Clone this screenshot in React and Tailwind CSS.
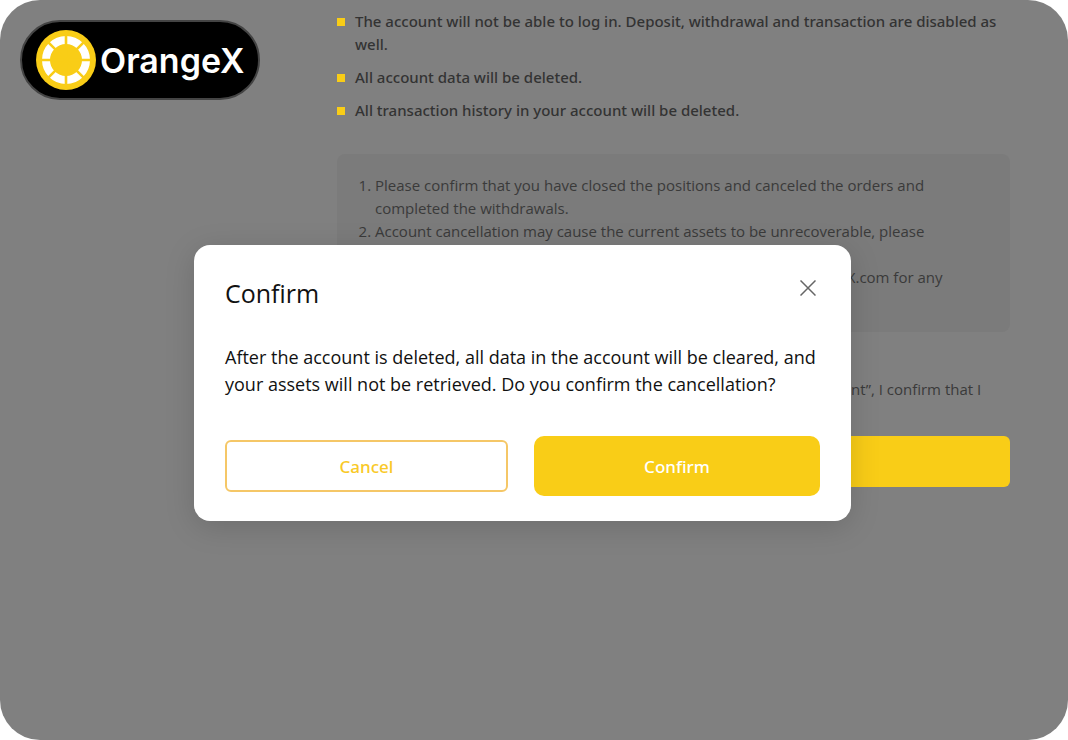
import React from 'react';

const effects = [
  'The account will not be able to log in. Deposit, withdrawal and transaction are disabled as well.',
  'All account data will be deleted.',
  'All transaction history in your account will be deleted.',
];

function LogoMark() {
  return (
    <svg viewBox="0 0 60 60" className="size-15 shrink-0" aria-hidden="true">
      <circle cx="30" cy="30" r="30" fill="#f9cd17" />
      <circle cx="30" cy="30" r="20" fill="none" stroke="#fff" strokeWidth="8" />
      <g stroke="#f9cd17" strokeWidth="2.6">
        <path d="M30 4V56" />
        <path d="M4 30H56" />
        <path d="M11.6 11.6L48.4 48.4" />
        <path d="M48.4 11.6L11.6 48.4" />
      </g>
    </svg>
  );
}

function Dialog() {
  return (
    <div
      role="dialog"
      aria-labelledby="dialog-title"
      className="w-full max-w-[657px] rounded-2xl bg-white pt-[30px] pb-[25px] px-[31px] text-[#111] shadow-[0_6px_30px_rgba(0,0,0,0.15)]"
    >
      <div className="flex items-start justify-between">
        <h2 id="dialog-title" className="text-[25px] leading-9">Confirm</h2>
        <button type="button" aria-label="Close" className="mt-px p-1 text-[#666]">
          <svg viewBox="0 0 16 16" className="size-4" fill="none" stroke="currentColor" strokeWidth="1.5">
            <path d="M0.5 0.5L15.5 15.5M15.5 0.5L0.5 15.5" />
          </svg>
        </button>
      </div>
      <p className="mt-[33px] text-lg leading-[27px]">
        After the account is deleted, all data in the account will be cleared, and your assets will not be retrieved. Do
        you confirm the cancellation?
      </p>
      <div className="mt-[38px] flex items-center gap-[26px] font-['Noto_Sans',sans-serif] text-[17px] font-medium">
        <button type="button" className="h-[52px] w-[283px] rounded-md border-2 border-[#f5c767] text-[#f9c927]">
          Cancel
        </button>
        <button type="button" className="h-15 flex-1 rounded-[10px] bg-[#f9cd17] text-white">
          Confirm
        </button>
      </div>
    </div>
  );
}

function App() {
  return (
    <div className="relative flex min-h-screen overflow-hidden rounded-[40px] bg-[#808080] font-['Open_Sans',sans-serif] text-[15px] leading-[23px] text-[#333]">
      <aside className="w-[337px] shrink-0 p-5">
        <div className="flex h-20 w-60 items-center gap-1 rounded-full border-2 border-[#444] bg-black pl-3.5">
          <LogoMark />
          <span className="font-['Inter',sans-serif] text-[34px] font-semibold text-white">OrangeX</span>
        </div>
      </aside>

      <main className="min-w-0 flex-1 pt-2.5 pr-[58px]">
        <ul className="flex flex-col gap-2.5 font-['Noto_Sans',sans-serif] font-medium">
          {effects.map((text) => (
            <li key={text} className="flex gap-2.5">
              <span className="mt-2 size-2 shrink-0 bg-[#f9cd17]" />
              <span>{text}</span>
            </li>
          ))}
        </ul>

        <ol className="mt-8 list-decimal rounded-lg bg-[#7b7b7b] py-5 pr-10 pl-[38px] text-[#3a3a3a]">
          <li>Please confirm that you have closed the positions and canceled the orders and completed the withdrawals.</li>
          <li>Account cancellation may cause the current assets to be unrecoverable, please proceed with caution.</li>
          <li>
            Please do feel free to contact our support team at support@OrangeX.com for any questions about the
            cancellation.
          </li>
        </ol>

        <label className="mt-[46px] flex items-start gap-2.5 text-[#3a3a3a]">
          <input type="checkbox" className="mt-1 size-4 shrink-0" />
          <span>
            By selecting this box and then clicking on the button “Delete my account”, I confirm that I have read the
            notice.
          </span>
        </label>
        <button
          type="button"
          aria-label="Delete account"
          className="mt-3 h-[51px] w-full rounded-md bg-[#f9cd17]"
        />
      </main>

      <div className="absolute inset-0 flex items-center justify-center pt-[26px] pr-[23px]">
        <Dialog />
      </div>
    </div>
  );
}

export default App;
